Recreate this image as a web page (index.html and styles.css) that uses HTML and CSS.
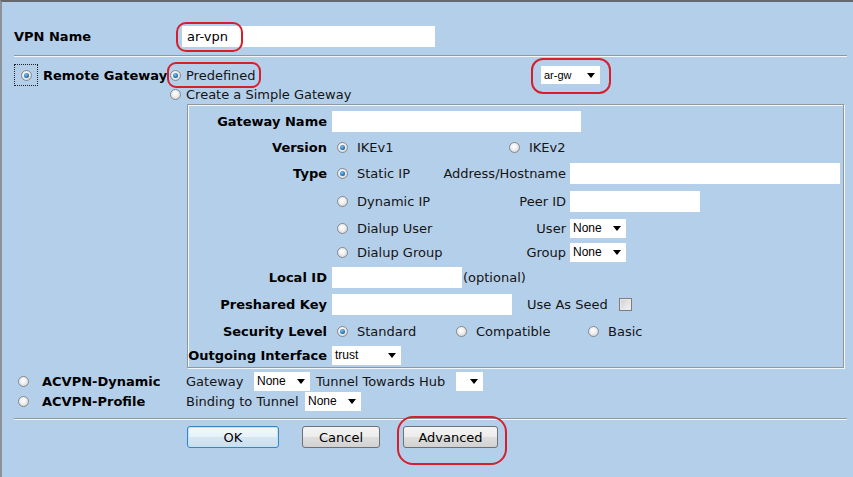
FILE: index.html
```html
<!DOCTYPE html>
<html>
<head>
<meta charset="utf-8">
<link rel="stylesheet" href="styles.css">
</head>
<body>
<div class="page">
  <div class="vpn-row">
    <span class="b vpn-label">VPN Name</span>
    <span class="input w-vpn">ar-vpn</span>
  </div>
  <div class="hr"></div>

  <div class="gw">
    <div class="gw-left">
      <span class="focus"><span class="radio on"></span></span>
      <span class="b">Remote Gateway</span>
    </div>
    <div class="gw-right">
      <div class="gw-row pre-row">
        <span class="gopt pre"><span class="radio on"></span>Predefined</span>
        <span class="select w-argw">ar-gw<i class="arrow"></i></span>
      </div>
      <div class="gw-row create-row">
        <span class="gopt"><span class="radio"></span>Create a Simple Gateway</span>
      </div>
      <div class="box">
        <div class="brow h26">
          <span class="blabel">Gateway Name</span>
          <span class="input w-gwname"></span>
        </div>
        <div class="brow h26">
          <span class="blabel">Version</span>
          <span class="opt o-ike1"><span class="radio on"></span>IKEv1</span>
          <span class="opt"><span class="radio"></span>IKEv2</span>
        </div>
        <div class="brow h27">
          <span class="blabel">Type</span>
          <span class="opt o-type"><span class="radio on"></span>Static IP</span>
          <span class="rlabel">Address/Hostname</span>
          <span class="input w-addr"></span>
        </div>
        <div class="brow h29">
          <span class="blabel"></span>
          <span class="opt o-type"><span class="radio"></span>Dynamic IP</span>
          <span class="rlabel">Peer ID</span>
          <span class="input w-peer"></span>
        </div>
        <div class="brow h24">
          <span class="blabel"></span>
          <span class="opt o-type"><span class="radio"></span>Dialup User</span>
          <span class="rlabel">User</span>
          <span class="select w-none">None<i class="arrow"></i></span>
        </div>
        <div class="brow h24">
          <span class="blabel"></span>
          <span class="opt o-type"><span class="radio"></span>Dialup Group</span>
          <span class="rlabel">Group</span>
          <span class="select w-none">None<i class="arrow"></i></span>
        </div>
        <div class="brow h27">
          <span class="blabel">Local ID</span>
          <span class="input w-local"></span>
          <span class="optional">(optional)</span>
        </div>
        <div class="brow h27">
          <span class="blabel">Preshared Key</span>
          <span class="input w-psk"></span>
          <span class="seed">Use As Seed</span>
          <span class="check"></span>
        </div>
        <div class="brow h27">
          <span class="blabel">Security Level</span>
          <span class="opt o-std"><span class="radio on"></span>Standard</span>
          <span class="opt o-comp"><span class="radio"></span>Compatible</span>
          <span class="opt"><span class="radio"></span>Basic</span>
        </div>
        <div class="brow h20">
          <span class="blabel">Outgoing Interface</span>
          <span class="select w-trust">trust<i class="arrow"></i></span>
        </div>
      </div>
    </div>
  </div>

  <div class="acrow first">
    <span class="aclabel"><span class="radio"></span><span class="b">ACVPN-Dynamic</span></span>
    <span class="t-gw">Gateway</span>
    <span class="select w-none">None<i class="arrow"></i></span>
    <span class="t-tunnel">Tunnel Towards Hub</span>
    <span class="select w-hub"><i class="arrow"></i></span>
  </div>
  <div class="acrow">
    <span class="aclabel"><span class="radio"></span><span class="b">ACVPN-Profile</span></span>
    <span class="t-bind">Binding to Tunnel</span>
    <span class="select w-none">None<i class="arrow"></i></span>
  </div>
  <div class="hr hr2"></div>

  <div class="buttons">
    <span class="btn btn-ok">OK</span>
    <span class="btn btn-cancel">Cancel</span>
    <span class="btn btn-adv">Advanced</span>
  </div>
</div>

<div class="mark m-vpn"></div>
<div class="mark m-pre"></div>
<div class="mark m-argw"></div>
<div class="mark m-adv"></div>
</body>
</html>
```

FILE: styles.css
```css
html, body {
  margin: 0;
  padding: 0;
}
body {
  width: 853px;
  height: 477px;
  box-sizing: border-box;
  background: #b4cfea;
  border-top: 2px solid #63696f;
  border-left: 2px solid #8b9299;
  font-family: "DejaVu Sans", Verdana, sans-serif;
  font-size: 13px;
  color: #141414;
  overflow: hidden;
  position: relative;
  white-space: nowrap;
}
.page {
  padding: 0 6px 0 12px;
}
.b {
  font-weight: bold;
  color: #000;
}

/* inputs */
.input {
  display: inline-flex;
  align-items: center;
  box-sizing: border-box;
  height: 21px;
  background: #fff;
  padding-left: 5px;
  font-size: 13px;
  color: #000;
}
.select {
  position: relative;
  display: inline-flex;
  align-items: center;
  box-sizing: border-box;
  height: 19px;
  background: #fff;
  padding-left: 3px;
  font-family: "Liberation Sans", Arial, sans-serif;
  font-size: 12px;
  color: #000;
  flex: none;
}
.arrow {
  position: absolute;
  right: 5px;
  top: 7px;
  width: 0;
  height: 0;
  border-left: 4px solid transparent;
  border-right: 4px solid transparent;
  border-top: 5px solid #000;
}

/* radios */
.radio {
  position: relative;
  display: inline-block;
  flex: none;
  width: 11px;
  height: 11px;
  box-sizing: border-box;
  border-radius: 50%;
  border: 1px solid #868a8f;
  background: radial-gradient(circle at 45% 40%, #ffffff 0%, #eeeeee 45%, #c4c4c4 100%);
}
.radio.on::after {
  content: "";
  position: absolute;
  left: 2px;
  top: 2px;
  width: 5px;
  height: 5px;
  border-radius: 50%;
  box-sizing: border-box;
  background: radial-gradient(circle at 40% 35%, #7cc6f5 0%, #2a78bb 55%, #163e62 100%);
}

/* VPN name */
.vpn-row {
  display: flex;
  align-items: center;
  height: 21px;
  padding-top: 24px;
}
.vpn-label {
  width: 168px;
}
.w-vpn { width: 253px; }

.hr {
  margin-top: 8px;
  height: 1px;
  background: #8f979f;
  border-bottom: 1px solid #f4f7fa;
}

/* gateway */
.gw {
  display: flex;
}
.gw-left {
  width: 154px;
  display: flex;
  align-items: center;
  gap: 5px;
  margin-top: 7px;
  height: 22px;
  align-self: flex-start;
}
.focus {
  display: flex;
  align-items: center;
  justify-content: center;
  width: 24px;
  height: 22px;
  box-sizing: border-box;
  border: 1px dotted #222;
}
.gw-right {
  flex: 1;
}
.gw-row {
  display: flex;
  align-items: center;
}
.pre-row {
  margin-top: 8px;
  height: 20px;
}
.create-row {
  height: 19px;
}
.gopt {
  display: flex;
  align-items: center;
  gap: 5px;
  padding-left: 2px;
}
.gopt.pre {
  width: 371px;
}
.w-argw {
  width: 59px;
  height: 18px;
  font-size: 11px;
  padding-left: 3px;
}

/* box */
.box {
  margin-left: 19px;
  width: 657px;
  height: 264px;
  box-sizing: border-box;
  border: 1px solid #8f979f;
  box-shadow: inset 1px 1px 0 #f4f7fa, 1px 1px 0 #f4f7fa;
  padding: 3px 0 2px 0;
}
.brow {
  display: flex;
  align-items: center;
}
.h20 { height: 20px; }
.h24 { height: 24px; }
.h26 { height: 26px; }
.h27 { height: 27px; }
.h29 { height: 29px; }
.blabel {
  width: 139px;
  margin-right: 5px;
  text-align: right;
  font-weight: bold;
  color: #000;
  flex: none;
}
.opt {
  display: flex;
  align-items: center;
  gap: 9px;
  flex: none;
}
.o-ike1 {
  margin-left: 5px;
  width: 172px;
}
.o-type {
  margin-left: 5px;
  width: 103px;
}
.o-std {
  margin-left: 5px;
  width: 119px;
}
.o-comp {
  width: 132px;
}
.rlabel {
  width: 126px;
  text-align: right;
  margin-right: 4px;
  flex: none;
}
.w-gwname { width: 249px; }
.w-addr { width: 270px; }
.w-peer { width: 130px; }
.w-local { width: 130px; }
.w-psk { width: 180px; }
.w-none { width: 56px; }
.w-trust { width: 69px; }
.w-hub { width: 27px; }
.optional {
  margin-left: 1px;
}
.seed {
  margin-left: 15px;
  width: 92px;
}
.check {
  width: 13px;
  height: 13px;
  box-sizing: border-box;
  border: 1px solid #7d7d7d;
  background: linear-gradient(135deg, #cfcfcf, #f5f5f5);
  box-shadow: inset 0 0 0 1px #e8e8e8;
}

/* ACVPN */
.acrow {
  display: flex;
  align-items: center;
  height: 20px;
}
.acrow.first {
  margin-top: 3px;
}
.aclabel {
  width: 172px;
  display: flex;
  align-items: center;
  gap: 13px;
  padding-left: 4px;
  box-sizing: border-box;
  flex: none;
}
.t-gw {
  width: 68px;
}
.t-tunnel {
  margin-left: 6px;
  width: 140px;
}
.t-bind {
  width: 119px;
}
.hr2 {
  margin-top: 7px;
}

/* buttons */
.buttons {
  display: flex;
  margin-top: 6px;
  padding-left: 173px;
  gap: 23px;
}
.btn {
  display: flex;
  align-items: center;
  justify-content: center;
  height: 22px;
  box-sizing: border-box;
  border: 1px solid #707070;
  border-radius: 3px;
  background: linear-gradient(#f4f4f4 0%, #ececec 50%, #dedede 51%, #d2d2d2 100%);
  color: #000;
  font-size: 13px;
}
.btn-ok {
  width: 92px;
  border-color: #3a84c0;
  box-shadow: inset 0 0 0 1px #bde3f8;
  background: linear-gradient(#f2f8fc 0%, #e6f1f8 50%, #d6e6f1 51%, #cddfec 100%);
}
.btn-cancel { width: 78px; }
.btn-adv { width: 95px; }

/* red annotation marks */
.mark {
  position: absolute;
  box-sizing: border-box;
  border: 2px solid #d4202c;
}
.m-vpn {
  left: 174px;
  top: 20px;
  width: 67px;
  height: 30px;
  border-radius: 10px;
}
.m-pre {
  left: 165px;
  top: 60px;
  width: 94px;
  height: 26px;
  border-radius: 9px;
}
.m-argw {
  left: 529px;
  top: 56px;
  width: 80px;
  height: 36px;
  border-radius: 12px;
}
.m-adv {
  left: 395px;
  top: 414px;
  width: 110px;
  height: 49px;
  border-radius: 16px;
}
```
